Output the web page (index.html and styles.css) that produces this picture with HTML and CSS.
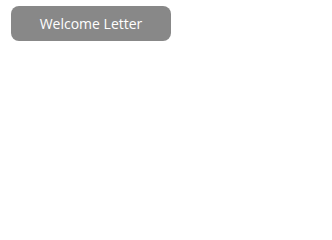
FILE: index.html
```html
<!DOCTYPE html>
<html>
<head>
<meta charset="utf-8">
<link rel="stylesheet" href="styles.css">
</head>
<body>
<div class="page">
  <button class="btn">Welcome Letter</button>
</div>
</body>
</html>
```
FILE: styles.css
```css
html, body {
  margin: 0;
  padding: 0;
  background: #ffffff;
}
.page {
  padding: 6px 0 0 11px;
}
.btn {
  display: flex;
  align-items: center;
  justify-content: center;
  width: 160px;
  height: 35px;
  margin: 0;
  padding: 0;
  border: none;
  border-radius: 8px;
  background: #888888;
  color: #ffffff;
  font-family: "Open Sans", sans-serif;
  font-size: 14px;
}
```
